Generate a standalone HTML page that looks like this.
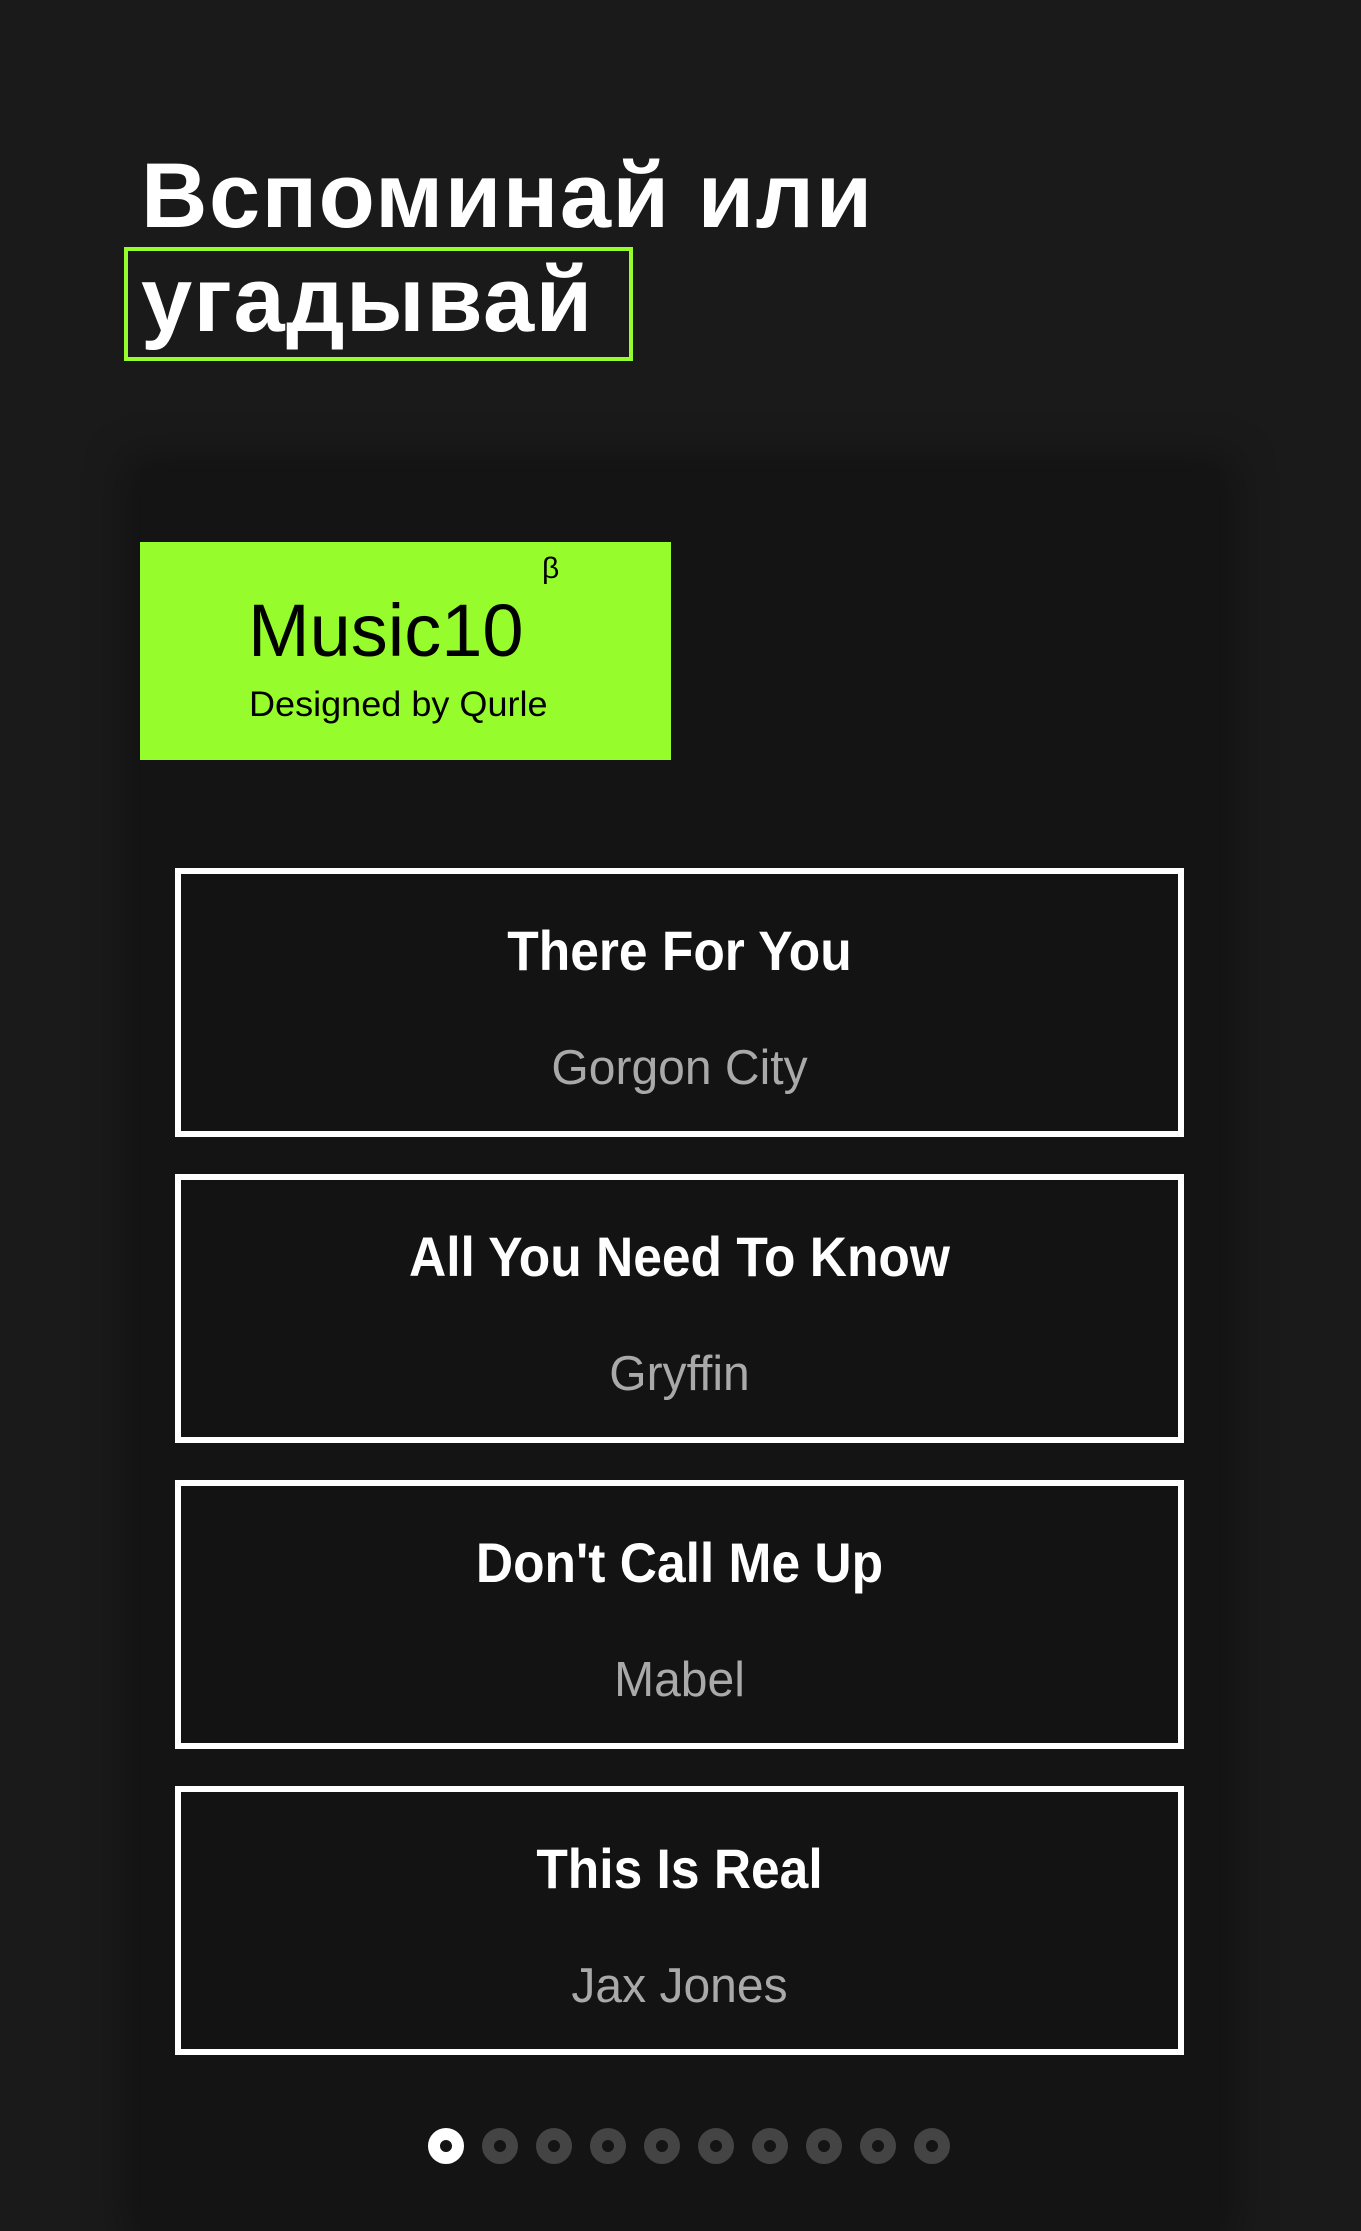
<!DOCTYPE html>
<html><head><meta charset="utf-8"><style>
*{margin:0;padding:0;box-sizing:border-box}
html,body{width:1361px;height:2218px;background:#1a1a1a;overflow:hidden;font-family:"Liberation Sans",sans-serif}
.h{position:absolute;left:141px;color:#fff;font-weight:bold;font-size:92px;white-space:nowrap;letter-spacing:1.5px}
.box{position:absolute;left:124px;top:247px;width:509px;height:114px;border:4px solid #96fc2b}
.panel{position:absolute;left:140px;top:471px;width:1080px;height:1760px;background:#141414;box-shadow:0 0 40px 12px rgba(0,0,0,.35)}
.logo{position:absolute;left:140px;top:542px;width:531px;height:218px;background:#96fc2b;color:#000}
.logo .m{position:absolute;left:108px;top:52px;font-size:74px;line-height:1;transform:scaleX(1.0);transform-origin:left}
.logo .d{position:absolute;left:109px;top:145px;font-size:35px;line-height:1;transform:scaleX(1.03);transform-origin:left}
.logo .b{position:absolute;left:402px;top:10px;font-size:30px}
.card{position:absolute;left:175px;width:1009px;height:269px;border:6px solid #fff;background:#131313;text-align:center}
.t{position:absolute;left:0;right:0;top:46px;font-size:56px;font-weight:bold;color:#fff;line-height:1.1;transform:scaleX(.92)}
.a{position:absolute;left:0;right:0;top:168px;font-size:49px;color:#a9a9a9;line-height:1.1;transform:scaleX(.98)}
.dot{position:absolute;top:2128px;width:36px;height:36px;border-radius:50%;border:12px solid #444}
.dot.on{border-color:#fff}
</style></head><body>
<div class="h" style="top:144px">Вспоминай или</div>
<div class="box"></div>
<div class="h" style="top:248px">угадывай</div>
<div class="panel"></div>
<div class="logo"><div class="m">Music10</div><div class="b">β</div><div class="d">Designed by Qurle</div></div>
<div class="card" style="top:868px"><div class="t">There For You</div><div class="a">Gorgon City</div></div>
<div class="card" style="top:1174px"><div class="t">All You Need To Know</div><div class="a">Gryffin</div></div>
<div class="card" style="top:1480px"><div class="t">Don't Call Me Up</div><div class="a">Mabel</div></div>
<div class="card" style="top:1786px"><div class="t">This Is Real</div><div class="a">Jax Jones</div></div>
<div class="dot on" style="left:428px"></div>
<div class="dot" style="left:482px"></div>
<div class="dot" style="left:536px"></div>
<div class="dot" style="left:590px"></div>
<div class="dot" style="left:644px"></div>
<div class="dot" style="left:698px"></div>
<div class="dot" style="left:752px"></div>
<div class="dot" style="left:806px"></div>
<div class="dot" style="left:860px"></div>
<div class="dot" style="left:914px"></div>
</body></html>
